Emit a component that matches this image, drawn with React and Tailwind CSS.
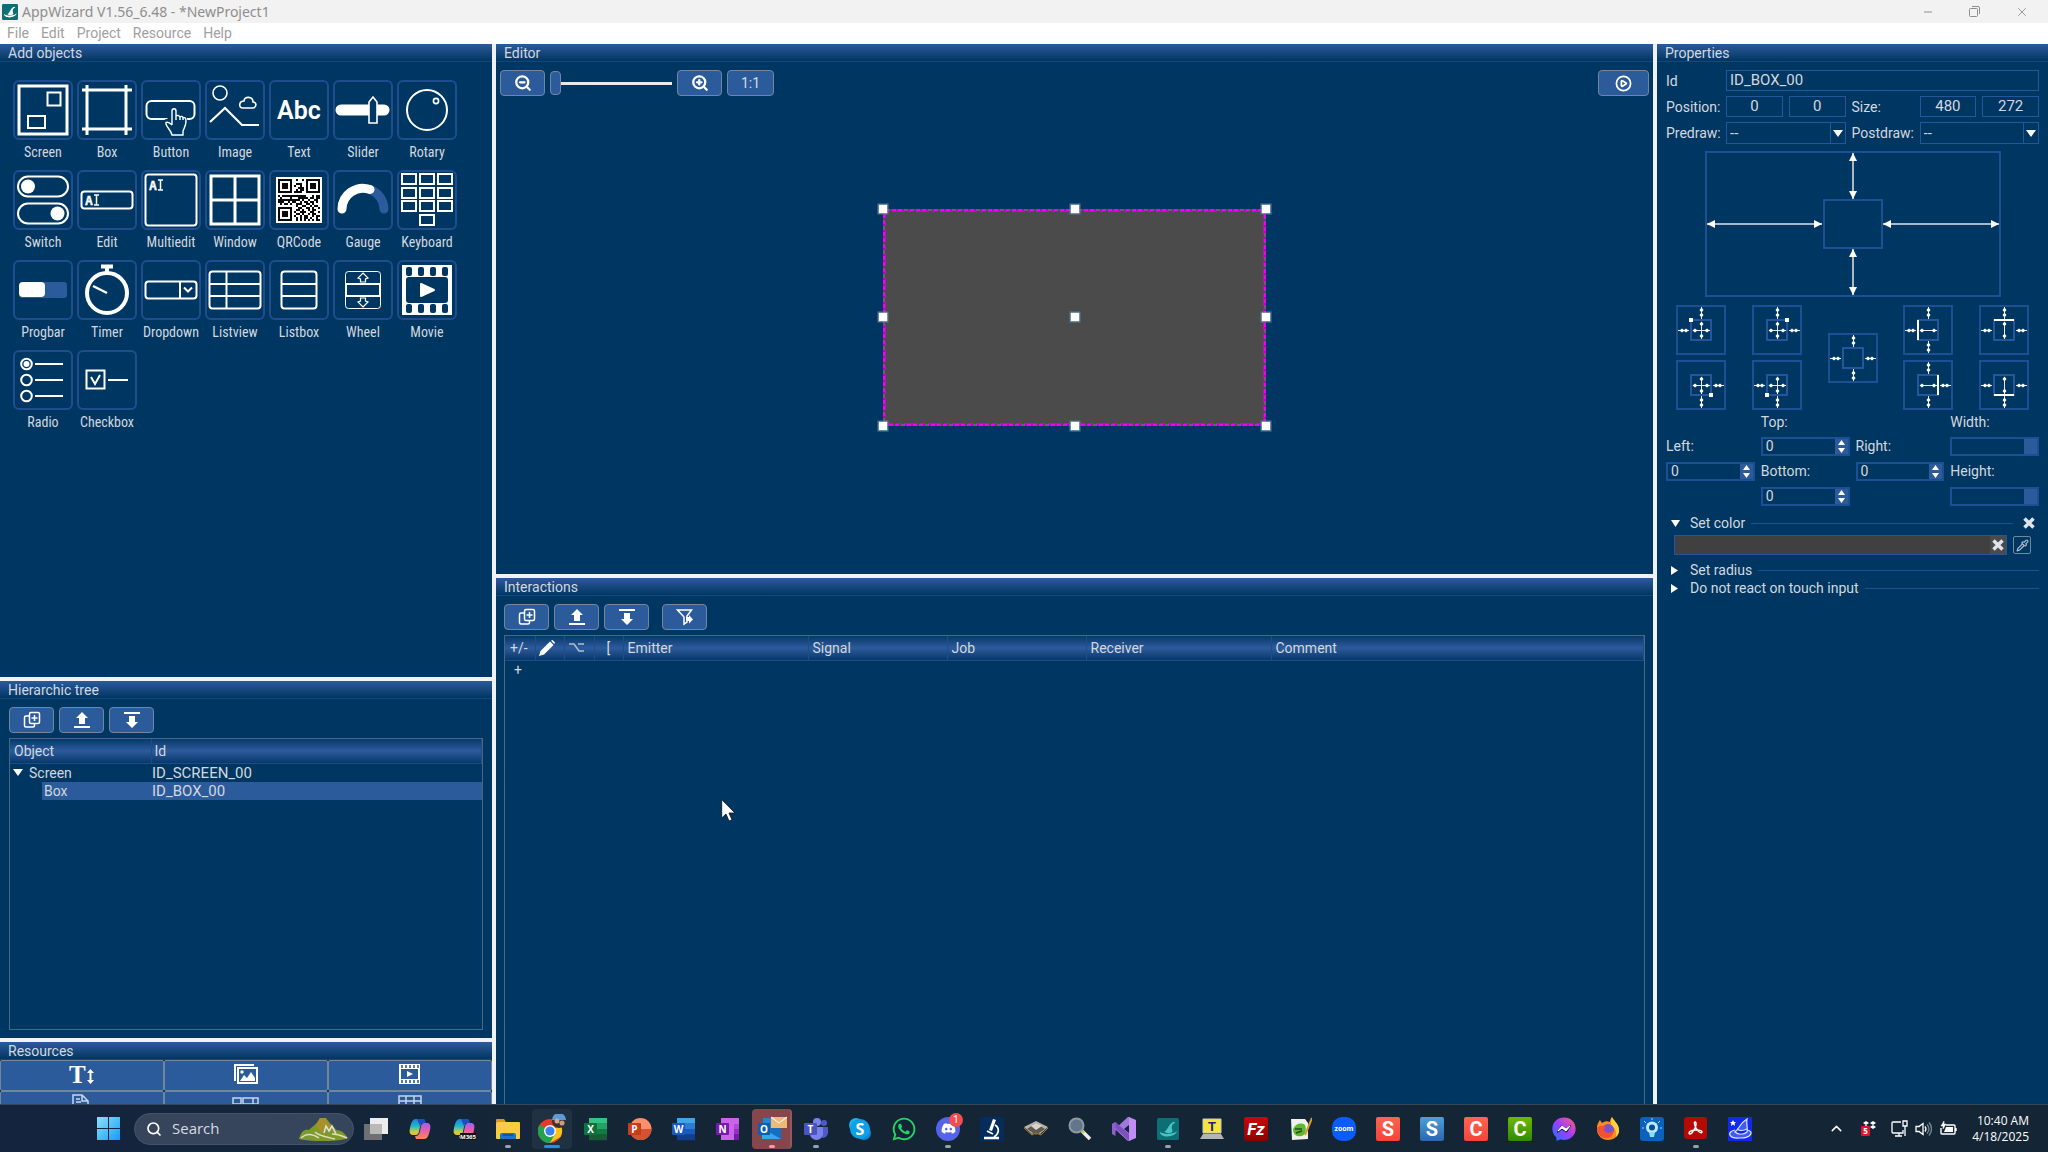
import { useState } from "react";
import { ZoomIn, ZoomOut, CirclePlay, Search, Minus, X, ChevronUp, Pipette } from "lucide-react";
import { FaDiscord, FaWhatsapp, FaFacebookMessenger } from "react-icons/fa";

const BG = "#003662";

/* ---------- object icons, all on a 60x60 tile ---------- */

const qrCells = (() => {
    const cells = [];
    const finder = (x, y, ox, oy) => {
        const dx = x - ox, dy = y - oy;
        if (dx < -1 || dy < -1 || dx > 7 || dy > 7) return null;
        if (dx < 0 || dy < 0 || dx > 6 || dy > 6) return false;
        if (dx === 0 || dy === 0 || dx === 6 || dy === 6) return true;
        return dx > 1 && dx < 5 && dy > 1 && dy < 5;
    };
    let seed = 77;
    for (let y = 0; y < 21; y++) {
        for (let x = 0; x < 21; x++) {
            seed = (seed * 1103515245 + 12345) % 2147483648;
            const f = finder(x, y, 0, 0) ?? finder(x, y, 14, 0) ?? finder(x, y, 0, 14);
            if (f === null ? (seed >> 12) % 2 === 0 : f) cells.push([x, y]);
        }
    }
    return cells;
})();

const TextCursor = ({ x, y }) => (
    <g>
        <text x={x} y={y + 11} fontSize="13" fontWeight="bold" fontFamily="DejaVu Sans Mono, monospace" fill="#fff">A</text>
        <path d={`M${x + 9} ${y + 1}h5M${x + 11.5} ${y + 1}v10M${x + 9} ${y + 11}h5`} strokeWidth="1.5" />
    </g>
);

const objects = [
    { name: "Screen", icon: <g><rect x="6" y="6" width="48" height="48" strokeWidth="3" /><rect x="34.5" y="12.5" width="13" height="13" /><rect x="15" y="36" width="17" height="12" /></g> },
    { name: "Box", icon: <path d="M10 5v50M49 5v50M5 10h50M5 49h50" strokeWidth="3" /> },
    {
        name: "Button", icon: <g>
            <rect x="5.5" y="21" width="48" height="18" rx="5" />
            <path d="M29 43V31c0-3 4-3 4 0v5c1-1 3-1 4 1 1-1 3-1 3 1 2-1 4 0 4 3 0 5-2 8-3 10v4H31c-1-5-5-8-6-12 0-2 2-2 4 0z" fill={BG} stroke={BG} strokeWidth="5" />
            <path d="M31 45V31c0-3 4-3 4 0v9m0-4c1-1 3-1 4 1v3m0-3c1-1 3-1 3 1v2m0-2c2-1 3 0 3 3 0 5-2 7-3 10v4H31c-1-5-5-7-6-11-1-3 3-2 6 1" strokeWidth="1.4" />
        </g>
    },
    { name: "Image", icon: <g strokeWidth="1.6"><circle cx="15" cy="13" r="7" /><path d="M38 28h9c5 0 5-6 1-6 0-6-9-6-9-1-5 0-6 7-1 7z" /><path d="M5 42 20 28 37 45h17" strokeWidth="2.2" /></g> },
    { name: "Text", icon: <text x="30" y="39" fontSize="25" fontWeight="600" textAnchor="middle" fontFamily="Roboto, sans-serif" fill="#fff" stroke="none">Abc</text> },
    { name: "Slider", icon: <g><path d="M8 30h43" strokeWidth="11" strokeLinecap="round" /><path d="M36 43V22l4-5 4 5v21z" fill={BG} strokeWidth="1.6" /></g> },
    { name: "Rotary", icon: <g><circle cx="30" cy="30" r="20" /><circle cx="39" cy="21" r="2.6" strokeWidth="1.6" /></g> },
    { name: "Switch", icon: <g><rect x="5" y="6.5" width="50" height="20" rx="10" /><rect x="5" y="33.5" width="50" height="20" rx="10" /><circle cx="15" cy="16.5" r="7" fill="#fff" stroke="none" /><circle cx="44.500" cy="43.5" r="7" fill="#fff" stroke="none" /></g> },
    { name: "Edit", icon: <g><rect x="4.5" y="21.500" width="51" height="17" rx="3" /><g strokeWidth=".3"><TextCursor x={8} y={24} /></g></g> },
    { name: "Multiedit", icon: <g><rect x="4.5" y="4.5" width="51" height="51" rx="3" /><g strokeWidth=".3"><TextCursor x={8} y={9} /></g></g> },
    { name: "Window", icon: <path d="M6 6h48v48H6zM30 6v48M6 30h48" strokeWidth="3" /> },
    {
        name: "QRCode", icon: <g stroke="none" shapeRendering="crispEdges">
            <rect x="7" y="7" width="46" height="46" fill="#fff" />
            {qrCells.map(([x, y]) => <rect key={`${x}-${y}`} x={9 + x * 2} y={9 + y * 2} width="2" height="2" fill="#0a0a0a" />)}
        </g>
    },
    { name: "Gauge", icon: <g strokeWidth="9" strokeLinecap="round"><path d="M37 19.500A21 21 0 0 1 51 39" stroke="#2c5b9c" /><path d="M9 39A21 21 0 0 1 37 19.5" /></g> },
    { name: "Keyboard", icon: <g>{[[4, 4], [22, 4], [40, 4], [4, 18], [22, 18], [40, 18], [4, 31], [22, 31], [40, 31], [22, 45]].map(([x, y]) => <rect key={`${x}-${y}`} x={x + 1} y={y} width="14" height="10" />)}</g> },
    { name: "Progbar", icon: <g stroke="none"><rect x="6" y="22" width="48" height="16" rx="3" fill="#2c5b9c" /><rect x="6" y="22" width="26" height="15" rx="4" fill="#fff" /></g> },
    { name: "Timer", icon: <g><circle cx="30" cy="33" r="20" strokeWidth="4" /><path d="M24 6.500h12M30 6v7" strokeWidth="4" /><path d="m16 26 14 7" strokeWidth="2.5" /></g> },
    { name: "Dropdown", icon: <g><rect x="4.5" y="21.500" width="51" height="17" rx="3" /><path d="M39 22v16M43 27.500l4 4 4-4" /></g> },
    { name: "Listview", icon: <g><rect x="4.500" y="11.500" width="51" height="37" rx="3" /><path d="M5 24h50M5 36h50M21.500 12v36" /></g> },
    { name: "Listbox", icon: <g><rect x="12.500" y="11.500" width="35" height="37" rx="3" /><path d="M13 24h34M13 36h34" /></g> },
    { name: "Wheel", icon: <g><rect x="12.500" y="11.500" width="35" height="37" rx="3" strokeWidth="1" /><path d="M13 24v12M47 24v12M13 24h34M13 36h34" /><path d="m30 13 5 5-2.500 1v3h-5v-3L25 18zM30 47l5-5-2.500-1v-3h-5v3L25 42z" strokeWidth="1.200" /></g> },
    {
        name: "Movie", icon: <g stroke="none" fill={BG}>
            <rect x="5" y="5" width="50" height="50" fill="#fff" />
            {[9, 21, 33, 45].map((x) => <g key={x}><rect x={x} y="7" width="6" height="9" rx="2" /><rect x={x} y="44" width="6" height="9" rx="2" /></g>)}
            <rect x="9" y="17" width="42" height="26" rx="3" />
            <path d="M24 24v12l13-6z" fill="#fff" stroke="#fff" strokeWidth="2" strokeLinejoin="round" />
        </g>
    },
    { name: "Radio", icon: <g>{[14, 30, 46].map((y) => <g key={y}><circle cx="13.500" cy={y} r="5.300" /><path d={`M22 ${y}h28`} /></g>)}<circle cx="13.500" cy="14" r="3" fill="#fff" stroke="none" /></g> },
    { name: "Checkbox", icon: <g><rect x="9.500" y="20.500" width="18" height="18" /><path d="m14 27 4 7 5-9M31 30h20" /></g> },
];

/* ---------- small shared pieces ---------- */

const CopyPlusIcon = () => (
    <svg width="18" height="18" viewBox="0 0 18 18" fill="none" stroke="#fff" strokeWidth="1.500">
        <rect x="6.500" y="1.500" width="10" height="11" rx="1.500" />
        <path d="M6 5H3Q1.500 5 1.500 6.500v8Q1.500 16 3 16h7q1.500 0 1.500-1.500V13M11.500 4v6M8.500 7h6" />
    </svg>
);
const MoveUpIcon = () => (
    <svg width="18" height="18" viewBox="0 0 18 18" fill="#fff"><path d="m9 1 6 6h-3v6H6V7H3zM1 15h16v2H1z" /></svg>
);
const MoveDownIcon = () => (
    <svg width="18" height="18" viewBox="0 0 18 18" fill="#fff"><path d="m9 17 6-6h-3V5H6v6H3zM1 1h16v2H1z" /></svg>
);

function ToolButton({ label, wide, children }) {
    return (
        <button aria-label={label} className={`flex h-[26px] items-center justify-center rounded-sm border border-[#74869c] bg-[#2c5b9c] text-sm text-[#d6dbe2] ${wide || "w-[45px]"}`}>
            {children}
        </button>
    );
}

function PanelTitle({ children }) {
    return (
        <h2 className="h-[18px] shrink-0 border-b border-[#15477f] bg-linear-to-b from-[#2c5b9c] to-[#003662] px-2 text-sm leading-[18px]">{children}</h2>
    );
}

const heading = "h-6 border border-t-0 border-l-0 border-[#1e4c88] bg-linear-to-b from-[#06386a] via-[#2c5b9c] to-[#06386a] text-left font-normal";

function Spinner({ label, value }) {
    return (
        <div className="flex h-[19px] border-2 border-[#1f4f93]">
            <input aria-label={label} defaultValue={value} className="w-full min-w-0 flex-1 bg-transparent px-[3px] outline-none" />
            <div className="flex w-[13px] flex-col items-center justify-around bg-[#2c5b9c]">
                {value !== "" && (
                    <>
                        <button aria-label={`${label} up`}><svg width="7" height="5"><path d="M3.500 0 7 5H0z" fill="#fff" /></svg></button>
                        <button aria-label={`${label} down`}><svg width="7" height="5"><path d="M3.500 5 7 0H0z" fill="#fff" /></svg></button>
                    </>
                )}
            </div>
        </div>
    );
}

function Dropdown({ id }) {
    return (
        <div className="relative flex h-[22px] border border-[#27559b] text-[15px]">
            <select id={id} className="w-full appearance-none bg-transparent px-[3px] outline-none"><option>--</option></select>
            <span className="pointer-events-none absolute inset-y-0 right-0 flex w-[15px] items-center justify-center border-l border-[#27559b]">
                <svg width="10" height="7"><path d="M0 0h10L5 7z" fill="#fff" /></svg>
            </span>
        </div>
    );
}

/* ---------- left column ---------- */

function AddObjects() {
    return (
        <section className="min-h-0 flex-[633_1_0%]">
            <PanelTitle>Add objects</PanelTitle>
            <div className="grid grid-cols-[repeat(7,60px)] gap-1 px-[13px] pt-[18px]">
                {objects.map((o) => (
                    <button key={o.name} className="flex h-[86px] flex-col items-center">
                        <span className="rounded-md outline-2 -outline-offset-2 outline-[#1f4d8e]">
                            <svg width="60" height="60" viewBox="0 0 60 60" fill="none" stroke="#fff" strokeWidth="2">{o.icon}</svg>
                        </span>
                        <span className="mt-1 font-['Roboto_Condensed','Liberation_Sans_Narrow',Roboto,sans-serif] text-sm leading-4">{o.name}</span>
                    </button>
                ))}
            </div>
        </section>
    );
}

function HierarchicTree() {
    return (
        <section className="flex min-h-0 flex-[357_1_0%] flex-col border-t-4 border-[#f0f1f5]">
            <PanelTitle>Hierarchic tree</PanelTitle>
            <div className="flex gap-[5px] px-[9px] pt-2 pb-[5px]">
                <ToolButton label="Duplicate"><CopyPlusIcon /></ToolButton>
                <ToolButton label="Move up"><MoveUpIcon /></ToolButton>
                <ToolButton label="Move down"><MoveDownIcon /></ToolButton>
            </div>
            <div className="mx-[9px] mb-2 flex-1 border border-[#4a6683]">
                <table className="w-full table-fixed border-collapse text-[15px]">
                    <thead className="text-sm">
                        <tr><th className={`${heading} w-[141px] pl-1`}>Object</th><th className={`${heading} pl-[3px]`}>Id</th></tr>
                    </thead>
                    <tbody>
                        <tr>
                            <td><div className="flex items-center gap-[6px] pl-[3px] text-sm leading-[18px]"><svg width="10" height="7"><path d="M0 0h10L5 7z" fill="#fff" /></svg>Screen</div></td>
                            <td className="pl-[1px] leading-[18px]">ID_SCREEN_00</td>
                        </tr>
                        <tr>
                            <td><div className="ml-8 bg-[#2c5b9c] pl-[2px] text-sm leading-[18px]">Box</div></td>
                            <td className="bg-[#2c5b9c] pl-[1px] leading-[18px]">ID_BOX_00</td>
                        </tr>
                    </tbody>
                </table>
            </div>
        </section>
    );
}

const resources = [
    { name: "Fonts", icon: <g><text x="0" y="20" fontSize="25" fontWeight="bold" fontFamily="Liberation Serif, serif">T</text><path d="m21.500 6 3.500 4h-2.500v7H25l-3.500 4-3.500-4h2.500v-7H18z" /></g> },
    { name: "Images", icon: <g><path d="M1 1h20v2H3v15H1z" /><path d="M4 4h21v17H4zm2 2v13h17V6z" fillRule="evenodd" /><path d="m7 18 4-6 3 3 4-6 4 6v3z" /><circle cx="9" cy="9" r="1.700" /></g> },
    { name: "Videos", icon: <g><path d="M2 1h21v20H2zm2 5v10h17V6z" fillRule="evenodd" /><path d="M5 2v3M9 2v3M13 2v3M17 2v3M21 2v3M5 17v3M9 17v3M13 17v3M17 17v3M21 17v3" stroke="#2c5b9c" strokeWidth="1.600" /><path d="M10 8v6l6-3z" /></g> },
    { name: "Texts", icon: <g fill="none" stroke="#c9d6ea" strokeWidth="1.500"><path d="M4 20V1h9l6 6v13M13 1v6h6M7 5h4M7 8h5M7 11h9" /></g> },
    { name: "Variables", icon: <g fill="none" stroke="#c9d6ea" strokeWidth="1.500"><path d="M0 4h8v6H0zM10 4h15v6H10zM20 4v6" /></g> },
    { name: "Tables", icon: <path d="M2 2h22v17H2zM2 7h22M9 2v16M17 2v16" fill="none" stroke="#c9d6ea" strokeWidth="1.500" /> },
];

function Resources() {
    return (
        <section className="h-[66px] shrink-0 overflow-hidden border-t-4 border-[#f0f1f5]">
            <PanelTitle>Resources</PanelTitle>
            <div className="grid grid-cols-3">
                {resources.map((r) => (
                    <button key={r.name} aria-label={r.name} className="flex h-[31px] items-start justify-center rounded-xs border border-[#74869c] bg-[#2c5b9c] pt-[2px]">
                        <svg className="overflow-visible" width="26" height="22" viewBox="0 0 26 22" fill="#fff">{r.icon}</svg>
                    </button>
                ))}
            </div>
        </section>
    );
}

/* ---------- centre ---------- */

function Editor() {
    const [zoom, setZoom] = useState(0);
    const handles = [0, 50, 100].flatMap((y) => [0, 50, 100].map((x) => [x, y]));

    return (
        <section className="flex min-h-0 flex-[532_1_0%] flex-col">
            <PanelTitle>Editor</PanelTitle>
            <div className="flex items-center gap-[5px] px-1 pt-2">
                <ToolButton label="Zoom out"><ZoomOut size={18} strokeWidth={3} color="#fff" /></ToolButton>
                <input type="range" aria-label="Zoom" min="0" max="100" value={zoom} onChange={(e) => setZoom(e.target.value)}
                    className="h-6 w-[122px] appearance-none bg-transparent [&::-webkit-slider-runnable-track]:h-[3px] [&::-webkit-slider-runnable-track]:bg-[#e8e9ee] [&::-webkit-slider-thumb]:mt-[-11px] [&::-webkit-slider-thumb]:h-6 [&::-webkit-slider-thumb]:w-[11px] [&::-webkit-slider-thumb]:appearance-none [&::-webkit-slider-thumb]:rounded-sm [&::-webkit-slider-thumb]:border [&::-webkit-slider-thumb]:border-[#74869c] [&::-webkit-slider-thumb]:bg-[#2c5b9c]" />
                <ToolButton label="Zoom in"><ZoomIn size={18} strokeWidth={3} color="#fff" /></ToolButton>
                <ToolButton label="Original size" wide="w-[47px]">1:1</ToolButton>
                <div className="flex-1" />
                <ToolButton label="Play" wide="w-[51px]"><CirclePlay size={17} strokeWidth={2.5} color="#fff" /></ToolButton>
            </div>
            <div className="flex flex-1 items-center justify-center pb-9">
                <div className="relative h-[217px] w-[383px] bg-[#4b4b4b]">
                    <svg className="absolute inset-0" width="383" height="217">
                        <rect x="1" y="1" width="381" height="215" fill="none" stroke="#8a6f8c" strokeWidth="1" />
                        <rect x="1" y="1" width="381" height="215" fill="none" stroke="#f200f2" strokeWidth="3" strokeDasharray="5 3 13 3" />
                        <rect x="1" y="1" width="381" height="215" fill="none" stroke="#7a0a7a" strokeWidth="1" strokeDasharray="2 4" />
                    </svg>
                    {handles.map(([x, y]) => (
                        <span key={`${x}-${y}`} className="absolute size-[9px] -translate-1/2 bg-white outline outline-[#56789a]" style={{ left: `${x}%`, top: `${y}%` }} />
                    ))}
                </div>
            </div>
        </section>
    );
}

function Interactions() {
    return (
        <section className="relative flex min-h-0 flex-[528_1_0%] flex-col border-t-4 border-[#f0f1f5]">
            <PanelTitle>Interactions</PanelTitle>
            <div className="flex gap-[5px] px-2 pt-2 pb-[5px]">
                <ToolButton label="Duplicate interaction"><CopyPlusIcon /></ToolButton>
                <ToolButton label="Move interaction up"><MoveUpIcon /></ToolButton>
                <ToolButton label="Move interaction down"><MoveDownIcon /></ToolButton>
                <div className="w-[3px]" />
                <ToolButton label="Filter">
                    <svg width="18" height="18" viewBox="0 0 18 18" fill="none" stroke="#fff" strokeWidth="1.500"><path d="M1.500 2h14L11 8v6l-3 2V9z" /><path d="M10 9h3V7l4 4.500-4 4V13h-3z" fill="#fff" stroke="none" /></svg>
                </ToolButton>
            </div>
            <div className="mx-2 flex-1 border border-b-0 border-[#4a6683]">
                <table className="w-full table-fixed border-collapse text-sm">
                    <thead>
                        <tr>
                            <th className={`${heading} w-[30px] pl-[5px]`}>+/-</th>
                            <th className={`${heading} w-[29px] pl-[3px]`}><svg width="16" height="16" aria-label="Edit"><path d="m0 16 1.500-5L11 1.500l3.500 3.500L5 14.500zM12 .8l1.500-.8L16 2.500l-.8 1.500z" fill="#fff" /></svg></th>
                            <th className={`${heading} w-[30px] pl-1`}><svg width="16" height="10" aria-label="Branch"><path d="M0 1h5l5 7h5M9 1h6" fill="none" stroke="#aebfd6" strokeWidth="1.500" /></svg></th>
                            <th className={`${heading} w-[29px] pl-3`}>[</th>
                            <th className={`${heading} w-[185px] pl-1`}>Emitter</th>
                            <th className={`${heading} w-[139px] pl-1`}>Signal</th>
                            <th className={`${heading} w-[139px] pl-1`}>Job</th>
                            <th className={`${heading} w-[185px] pl-1`}>Receiver</th>
                            <th className={`${heading} pl-1`}>Comment</th>
                        </tr>
                    </thead>
                    <tbody>
                        <tr><td className="pr-1 text-center leading-[18px]"><button aria-label="Add interaction">+</button></td><td colSpan="8" /></tr>
                    </tbody>
                </table>
            </div>
            <svg className="absolute top-[220px] left-[225px]" width="15" height="24" viewBox="0 0 15 24">
                <path d="M.7 1.500v18.500l4.300-4 3 7 3-1.300-3-6.700h6z" fill="#fff" stroke="#111" strokeWidth=".8" />
            </svg>
        </section>
    );
}

/* ---------- properties ---------- */

// double headed arrow, drawn horizontally or vertically
function Arrow({ x1, y1, x2, y2 }) {
    if (y1 === y2) {
        return <g><path d={`M${x1} ${y1}H${x2}`} /><path d={`M${x1} ${y1}l8-4v8zM${x2} ${y1}l-8-4v8z`} fill="#fff" stroke="none" /></g>;
    }
    return <g><path d={`M${x1} ${y1}V${y2}`} /><path d={`M${x1} ${y1}l-4 8h8zM${x1} ${y2}l-4-8h8z`} fill="#fff" stroke="none" /></g>;
}

// at the small size the arrow heads are only knots on the line
const diamond = (x, y) => `M${x - 2.5} ${y}l2.5-2 2.500 2-2.500 2z`;
const tallDiamond = (x, y) => `M${x - 2} ${y}l2-2.500 2 2.500-2 2.500z`;

const arrows = {
    left: { line: "M2 25.500h11", knots: diamond(6, 25.5) + diamond(10, 25.5) },
    right: { line: "M37 25.500h11", knots: diamond(40, 25.5) + diamond(44, 25.5) },
    top: { line: "M25.500 2v12", knots: tallDiamond(25.5, 5) + tallDiamond(25.5, 10) },
    bottom: { line: "M25.500 36v12", knots: tallDiamond(25.5, 40) + tallDiamond(25.5, 45) },
    h: { line: "M17 25.500h17", knots: diamond(19, 25.5) + diamond(31, 25.5) },
    v: { line: "M25.500 17v17", knots: tallDiamond(25.5, 19) + tallDiamond(25.5, 31) },
};

function Anchor({ name, parts, dot, edge }) {
    return (
        <button aria-label={name}>
            <svg width="50" height="50" viewBox="0 0 50 50" fill="none" stroke="#e6ebf2" strokeWidth="1">
                <rect x="1" y="1" width="48" height="48" stroke="#1f4f93" strokeWidth="2" />
                <rect x="15" y="15" width="20" height="20" stroke="#27559b" strokeWidth="2" />
                {parts.map((p) => (
                    <g key={p}>
                        <path d={arrows[p].line} />
                        <path d={arrows[p].knots} fill="#fff" stroke="none" />
                    </g>
                ))}
                {dot && <rect x={dot[0] - 2} y={dot[1] - 2} width="4" height="4" fill="#fff" stroke="none" />}
                {edge && <path d={edge} stroke="#fff" strokeWidth="2" />}
            </svg>
        </button>
    );
}

const anchorColumns = [
    [{ name: "Top left", parts: ["left", "top", "h", "v"], dot: [15, 15] }, { name: "Bottom right", parts: ["right", "bottom", "h", "v"], dot: [35, 35] }],
    [{ name: "Top right", parts: ["right", "top", "h", "v"], dot: [35, 15] }, { name: "Bottom left", parts: ["left", "bottom", "h", "v"], dot: [15, 35] }],
    [{ name: "All sides", parts: ["left", "right", "top", "bottom"] }],
    [{ name: "Left side", parts: ["left", "top", "bottom", "h"], edge: "M15 15v20" }, { name: "Right side", parts: ["right", "top", "bottom", "h"], edge: "M35 15v20" }],
    [{ name: "Top side", parts: ["left", "right", "top", "v"], edge: "M15 15h20" }, { name: "Bottom side", parts: ["left", "right", "bottom", "v"], edge: "M15 35h20" }],
];

const CrossIcon = () => (
    <svg width="12" height="12"><path d="m1.500 1.500 9 9M10.500 1.500l-9 9" stroke="#dfe3ea" strokeWidth="3.500" /></svg>
);

function Properties() {
    const field = "h-[21px] w-full min-w-0 border border-[#27559b] bg-transparent outline-none";
    return (
        <section className="w-[395px] shrink-0 border-l-4 border-[#f0f1f5]">
            <PanelTitle>Properties</PanelTitle>
            <div className="px-[9px] pt-2 text-sm">
                <div className="grid grid-cols-[60px_1fr_74px_1fr] items-center gap-y-[5px]">
                    <label htmlFor="prop-id">Id</label>
                    <input id="prop-id" defaultValue="ID_BOX_00" className={`${field} col-span-3 px-[3px] text-[15px]`} />
                    <label htmlFor="prop-x">Position:</label>
                    <div className="flex gap-[6px] text-[15px]">
                        <input id="prop-x" defaultValue="0" className={`${field} text-center`} />
                        <input aria-label="Position y" defaultValue="0" className={`${field} text-center`} />
                    </div>
                    <label htmlFor="prop-w" className="pl-[6px]">Size:</label>
                    <div className="flex gap-[6px] text-[15px]">
                        <input id="prop-w" defaultValue="480" className={`${field} text-center`} />
                        <input aria-label="Height in pixels" defaultValue="272" className={`${field} text-center`} />
                    </div>
                    <label htmlFor="predraw">Predraw:</label>
                    <Dropdown id="predraw" />
                    <label htmlFor="postdraw" className="pl-[6px]">Postdraw:</label>
                    <Dropdown id="postdraw" />
                </div>

                <svg className="mx-auto mt-[7px]" width="296" height="146" fill="none" stroke="#dfe5ee" strokeWidth="1.500">
                    <rect x="1" y="1" width="294" height="144" stroke="#1f4f93" strokeWidth="2" />
                    <rect x="119" y="49" width="58" height="48" stroke="#1f4f93" strokeWidth="2" />
                    <Arrow x1={2} y1={73} x2={117} y2={73} />
                    <Arrow x1={178} y1={73} x2={294} y2={73} />
                    <Arrow x1={148} y1={2} x2={148} y2={48} />
                    <Arrow x1={148} y1={98} x2={148} y2={144} />
                </svg>

                <div className="flex items-center justify-between px-[10px] pt-2">
                    {anchorColumns.map((col) => (
                        <div key={col[0].name} className="flex flex-col gap-[5px]">
                            {col.map((a) => <Anchor key={a.name} {...a} />)}
                        </div>
                    ))}
                </div>

                <div className="mt-[3px] grid grid-cols-4 grid-rows-[18px_19px_19px_19px] gap-[6px] leading-[19px]">
                    <span /><span>Top:</span><span /><span>Width:</span>
                    <span>Left:</span><Spinner label="Top" value="0" /><span>Right:</span><Spinner label="Width" value="" />
                    <Spinner label="Left" value="0" /><span>Bottom:</span><Spinner label="Right" value="0" /><span>Height:</span>
                    <span /><Spinner label="Bottom" value="0" /><span /><Spinner label="Height" value="" />
                </div>

                <div className="mt-2 flex h-[18px] items-center">
                    <button className="flex items-center gap-[10px] pl-[5px]"><svg width="9" height="7"><path d="M0 0h9L4.500 7z" fill="#fff" /></svg>Set color</button>
                    <span className="mx-[6px] h-px flex-1 bg-[#1f4f93]" />
                    <button aria-label="Remove color" className="px-1"><CrossIcon /></button>
                </div>
                <div className="mt-[3px] flex items-center gap-[6px] pr-2 pl-2">
                    <div className="flex h-5 flex-1 items-center justify-end border border-[#27559b] bg-[#404040]">
                        <button aria-label="Clear color" className="flex h-full w-4 items-center justify-center bg-[#4b4b4b]"><CrossIcon /></button>
                    </div>
                    <button aria-label="Pick color" className="flex size-[18px] items-center justify-center rounded-xs border border-[#74869c]"><Pipette size={13} color="#b9c6d4" /></button>
                </div>
                <div className="mt-[6px]">
                    {["Set radius", "Do not react on touch input"].map((s) => (
                        <div key={s} className="flex h-[18px] items-center">
                            <button className="flex items-center gap-3 pl-[5px]"><svg width="7" height="9"><path d="M0 0v9l7-4.500z" fill="#fff" /></svg>{s}</button>
                            <span className="ml-[6px] h-px flex-1 bg-[#1f4f93]" />
                        </div>
                    ))}
                </div>
            </div>
        </section>
    );
}

/* ---------- taskbar ---------- */

// square app tile with a letter on it
const Tile = ({ from, to, letter, size = 17, italic }) => (
    <svg width="24" height="24" viewBox="0 0 24 24">
        <defs><linearGradient id={`t${from.slice(1)}`} x2="0" y2="1"><stop stopColor={from} /><stop offset="1" stopColor={to} /></linearGradient></defs>
        <rect width="24" height="24" rx="2" fill={`url(#t${from.slice(1)})`} />
        <text x="12" y={italic ? 18 : 19} fontSize={size} fontWeight="bold" fontStyle={italic ? "italic" : "normal"} textAnchor="middle" fontFamily="Roboto, sans-serif" fill="#fff">{letter}</text>
    </svg>
);

const Office = ({ letter, dark, children }) => (
    <svg width="24" height="24" viewBox="0 0 24 24">
        {children}
        <rect x="0" y="6" width="13" height="12" rx="1" fill={dark} />
        <text x="6.500" y="15.500" fontSize="10" fontWeight="bold" textAnchor="middle" fontFamily="Open Sans, sans-serif" fill="#fff">{letter}</text>
    </svg>
);

const Bands = ({ colors }) => (
    <g>{colors.map((c, i) => <rect key={c} x="5" y={1 + i * (22 / colors.length)} width="18" height={22 / colors.length + 0.2} fill={c} />)}</g>
);

const Copilot = ({ badge }) => (
    <svg width="24" height="24" viewBox="0 0 24 24">
        <defs>
            <linearGradient id="cpA" x2="0" y2="1"><stop stopColor="#1e7fe0" /><stop offset=".45" stopColor="#20b8c8" /><stop offset=".8" stopColor="#c8d040" /><stop offset="1" stopColor="#f5b82a" /></linearGradient>
            <linearGradient id="cpB" x2="0" y2="1"><stop stopColor="#a05ff0" /><stop offset=".5" stopColor="#e860a8" /><stop offset="1" stopColor="#ff8a50" /></linearGradient>
        </defs>
        <path d="M16 2H8C4 2 3 7 2 11c-1 5 0 7 3 7h3c3 0 3-4 4-8s2-5 5-5z" fill="url(#cpA)" />
        <path d="M8 22h8c4 0 5-5 6-9 1-5 0-7-3-7h-3c-3 0-3 4-4 8s-2 5-5 5z" fill="url(#cpB)" />
        <path d="M9 2h6c2 0 2 1 3 4h-3c-2 0-3 1-3 3z" fill="#1a4fc4" />
        {badge && <g><rect x="8" y="16" width="16" height="7" fill="#111" /><text x="16" y="22" fontSize="6" fontWeight="bold" textAnchor="middle" fontFamily="Open Sans, sans-serif" fill="#fff">M365</text></g>}
    </svg>
);

const Hat = ({ color = "#4cc3c6", size = 24, bg = "#0c6f74" }) => (
    <svg width={size} height={size} viewBox="0 0 24 24">
        <rect width="24" height="24" rx="2" fill={bg} />
        <path d="M3 15c0 7 17 7 19-1-2 2-4 3-7 3-5 1-9 0-12-2z" fill={color} />
        <path d="M8 15c4-2 4-8 10-11l2 1-3 2c-2 3 0 6 0 8-2 2-7 2-9 0z" fill={color} />
    </svg>
);

const apps = [
    { name: "Task view", icon: <svg width="26" height="24"><rect x="7" y="1" width="18" height="16" fill="#ececec" /><rect x="1" y="7" width="18" height="16" fill="#7e7e7e" fillOpacity=".85" /><rect x="7" y="7" width="12" height="10" fill="#b9b9b9" /></svg> },
    { name: "Copilot", icon: <Copilot /> },
    { name: "Copilot M365", icon: <Copilot badge /> },
    { name: "File Explorer", open: true, icon: <svg width="24" height="24"><path d="M0 3q0-1 1-1h7l2 3h-10z" fill="#dc9a12" /><rect y="5" width="24" height="17" rx="1" fill="#fccb45" /><path d="M4 22v-4q0-2 2-2h12q2 0 2 2v4z" fill="#1577c8" /><path d="M7 18h10" stroke="#0c4f8c" strokeWidth="1.500" /></svg> },
    {
        name: "Chrome", active: true, icon: <svg width="28" height="30" viewBox="0 0 28 30">
            <circle cx="12" cy="17" r="12" fill="#e33b2e" /><path d="M12 17 1.600 11A12 12 0 0 0 12 29z" fill="#25a250" /><path d="m12 29 10.500-6A12 12 0 0 0 22.500 11L12 17z" fill="#fbc116" /><path d="M1.600 11A12 12 0 0 0 12 29l5-9z" fill="#25a250" />
            <circle cx="12" cy="17" r="6" fill="#fff" /><circle cx="12" cy="17" r="4.600" fill="#3a80f0" />
            <circle cx="21" cy="7" r="7" fill="#3a3234" /><path d="M14 6a7 7 0 0 1 14 0z" fill="#5d9bd8" /><circle cx="19" cy="7" r="2.500" fill="#d7a58a" /><circle cx="24" cy="9" r="2.500" fill="#cf9a80" />
        </svg>
    },
    { name: "Excel", icon: <Office letter="X" dark="#107040"><Bands colors={["#33c481", "#21a366", "#107c41", "#185c37"]} /></Office> },
    { name: "PowerPoint", icon: <Office letter="P" dark="#c43e1c"><circle cx="12.500" cy="12" r="11" fill="#ff8f6b" /><path d="M1.500 12a11 11 0 0 0 22 0z" fill="#d35230" /></Office> },
    { name: "Word", icon: <Office letter="W" dark="#185abd"><Bands colors={["#41a5ee", "#2b7cd3", "#185abd", "#103f91"]} /></Office> },
    { name: "OneNote", icon: <Office letter="N" dark="#7719aa"><rect x="5" y="1" width="18" height="22" fill="#ca64ea" /><path d="M18 7h5v5h-5z" fill="#ae4bd5" /><path d="M18 12h5v5h-5z" fill="#9332bf" /><path d="M18 17h5v6h-5z" fill="#7719aa" /></Office> },
    {
        name: "Outlook", alert: true, icon: <svg width="30" height="26" viewBox="0 0 30 26">
            <rect x="6" y="2" width="17" height="20" fill="#1f86d8" /><path d="M5 12h19v11H5z" fill="#35a7ec" /><path d="m5 12 19 11V12z" fill="#1370c0" /><rect x="1" y="7" width="12" height="12" fill="#0f5fb0" />
            <text x="7" y="16.500" fontSize="10" fontWeight="bold" textAnchor="middle" fontFamily="Open Sans, sans-serif" fill="#fff">O</text>
            <rect x="14" y="1" width="16" height="11" fill="#efb976" /><path d="m14 1 8 6 8-6" fill="none" stroke="#fff" />
        </svg>
    },
    { name: "Teams", open: true, icon: <Office letter="T" dark="#4b53bc"><circle cx="13" cy="5" r="4" fill="#7b83eb" /><circle cx="20" cy="6" r="3" fill="#5059c9" /><path d="M16 10h8v6q-1 5-6 5z" fill="#5059c9" /><path d="M6 10h13v8q-2 5-7 5-5-1-6-5z" fill="#7b83eb" /></Office> },
    { name: "Skype", icon: <svg width="24" height="24"><circle cx="8" cy="8" r="7" fill="#1fb0f0" /><circle cx="16" cy="16" r="7" fill="#0a86d8" /><circle cx="12" cy="12" r="10" fill="#0f9fe6" /><text x="12" y="18" fontSize="16" fontWeight="bold" textAnchor="middle" fontFamily="Open Sans, sans-serif" fill="#fff">S</text></svg> },
    { name: "WhatsApp", icon: <FaWhatsapp size={26} color="#25d366" /> },
    { name: "Discord", open: true, badge: "1", icon: <span className="flex size-6 items-center justify-center rounded-full bg-[#5562ea]"><FaDiscord size={15} color="#fff" /></span> },
    { name: "Microscope", icon: <svg width="24" height="24"><rect width="24" height="24" fill="#062c5c" /><path d="m13 2 3 1-4 11-3-1z" fill="#fff" /><path d="m7 14 6 3M15 8c5 3 4 9-1 12" stroke="#fff" strokeWidth="1.800" fill="none" /><path d="M4 21h15" stroke="#fff" strokeWidth="2.500" /></svg> },
    { name: "Flash programmer", icon: <svg width="24" height="24"><path d="m0 10 12-6 12 6-8 7-4-2-4 2z" fill="#b9b4a8" /><path d="m3 12 9-6 9 6-9 6z" fill="#5f5a50" /><path d="m7 9 5-3 6 3-6 4z" fill="#d9d6cc" /><path d="m0 11 8 7 4-2 5 2 7-7" stroke="#a8792c" strokeWidth="1" fill="none" /></svg> },
    { name: "Magnifier", icon: <svg width="24" height="24"><path d="m14 14 8 8" stroke="#eee" strokeWidth="3.500" /><path d="m13 13 3 3" stroke="#b9d44a" strokeWidth="3" /><circle cx="8.500" cy="8.500" r="7" fill="#62758c" stroke="#8f98a3" strokeWidth="2" /></svg> },
    { name: "Visual Studio", icon: <svg width="24" height="24"><path d="m17 0 1 7L4 19l-4-2V7l4-2 3 3z" fill="none" /><path d="M17 0 4 12l-2-2v4l2-2 13 12v-7l-6-5 6-5z" fill="#a179dc" stroke="#a179dc" strokeWidth="1.500" /><path d="M0 7 3.500 5 17 17v7L0 8z" fill="#7d4fc0" /><path d="M0 7v10l3.500 2V5z" fill="#8d5fce" /><path d="M17 0v24l7-3V3z" fill="#c08cf5" /></svg> },
    { name: "AppWizard", open: true, icon: <Hat size={22} /> },
    { name: "Tera Term", icon: <svg width="24" height="24"><path d="M3 2h18v14H3z" fill="#f6e63c" stroke="#c9c9c9" /><text x="12" y="14" fontSize="13" fontWeight="bold" textAnchor="middle" fontFamily="Liberation Sans, sans-serif" fill="#1a237a">T</text><path d="M3 17h18l3 5H0z" fill="#b4b4b4" /></svg> },
    { name: "FileZilla", icon: <Tile from="#c80808" to="#8c0000" letter="Fz" size={17} italic /> },
    { name: "Notepad++", icon: <svg width="24" height="24"><path d="M3 2h14l3 4v16l-16 1z" fill="#eef2ea" /><path d="M5 12c2-5 8-7 12-4 2 5 0 11-4 11-5 1-8-2-8-7z" fill="#5fb832" /><path d="M7 12h7M8 16l6-2" stroke="#244d14" strokeWidth="1.500" /><path d="m24 1-7 17" stroke="#d99a2b" strokeWidth="2" /></svg> },
    { name: "Zoom", icon: <svg width="24" height="24"><rect width="24" height="24" rx="10" fill="#0b5cff" /><text x="12" y="14" fontSize="7" fontWeight="bold" textAnchor="middle" fontFamily="Open Sans, sans-serif" fill="#fff">zoom</text></svg> },
    { name: "Snagit", icon: <Tile from="#ff6450" to="#f5433a" letter="S" size={20} /> },
    { name: "Snagit Editor", icon: <Tile from="#4f9fd8" to="#2b68ac" letter="S" size={20} /> },
    { name: "Camtasia Recorder", icon: <Tile from="#ff6552" to="#f5443a" letter="C" size={20} /> },
    { name: "Camtasia", icon: <Tile from="#6fb800" to="#2f8c00" letter="C" size={20} /> },
    {
        name: "Messenger", icon: <svg width="24" height="24" viewBox="0 0 24 24">
            <defs><linearGradient id="msg" x1="1" y1="0" x2="0" y2="1"><stop stopColor="#ff5f74" /><stop offset=".5" stopColor="#a03cff" /><stop offset="1" stopColor="#1478ff" /></linearGradient></defs>
            <FaFacebookMessenger size={24} style={{ fill: "url(#msg)" }} /><path d="m6 14 4-5 4 3 4-3-4 5-4-3z" fill="#fff" stroke="#fff" />
        </svg>
    },
    { name: "Firefox", icon: <svg width="24" height="24"><path d="M1 9c1-3 2-5 3-6l2 3c3-2 5-2 8-1 0-2 1-4 2-5 1 3 7 7 7 13 0 6-5 10-11 10S1 18 1 13z" fill="#ff8a1f" /><path d="M16 0c1 3 7 7 7 13 0 3-1 5-3 7 1-6-1-9-5-12 0-3 0-6 1-8z" fill="#ffd43a" /><circle cx="12" cy="13" r="6" fill="#7a4fd0" /><path d="M1 11c3-3 7-3 9 0-3 0-3 3 0 4 3 2 6 0 7-2 1 6-4 9-9 8-4-1-7-5-7-10z" fill="#f5502f" /></svg> },
    { name: "Tips", icon: <svg width="24" height="24"><rect width="24" height="24" rx="3" fill="#0a62bd" /><circle cx="12" cy="10.500" r="6" fill="#bdeafa" /><path d="M9 15h6l-1 5h-4z" fill="#8fdcf5" /><circle cx="12" cy="10.500" r="3" fill="#0a4e94" /><path d="M12 1v2M4 4l2 2M20 4l-2 2M2 11h2M20 11h2" stroke="#8fdcf5" /></svg> },
    { name: "Acrobat", open: true, icon: <svg width="24" height="24"><rect width="23" height="22" rx="3" fill="#b30b00" /><path d="M11 5c2 0 1 5-1 8-2 4-5 5-5 3s4-3 7-3 6 0 6 2-4 0-6-4-2-6-1-6z" fill="none" stroke="#fff" strokeWidth="1.400" /></svg> },
    { name: "Wizard", icon: <svg width="24" height="24"><rect width="24" height="24" fill="#1128f0" /><path d="M7 15c4-3 5-9 12-13-1 4 1 9 0 13-3 3-9 3-12 0zM7 13c-9 2-6 9 5 8 12 0 14-7 7-8M9 12c3 2 6 2 10 0" fill="#6f8cf8" fillOpacity=".5" stroke="#dfe6ff" strokeWidth="1.200" /><path d="m5 3 1 2h2L6.500 6.500 7 9 5 7.500 3 9l.5-2.500L2 5h2z" fill="#fff" /></svg> },
];

function Taskbar() {
    return (
        <footer className="flex h-12 shrink-0 items-center border-t border-[#34475a] bg-linear-to-r from-[#14243f] via-[#142636] via-30% to-[#142636] pr-[19px] font-['Open_Sans',sans-serif] text-white">
            <button aria-label="Start" className="ml-[97px]">
                <svg width="23" height="23">
                    <defs><linearGradient id="win" x2="1" y2="1"><stop stopColor="#8be2fb" /><stop offset="1" stopColor="#149cf5" /></linearGradient></defs>
                    <path d="M0 0h11v11H0zM12 0h11v11H12zM0 12h11v11H0zM12 12h11v11H12z" fill="url(#win)" />
                </svg>
            </button>
            <label className="ml-[14px] flex h-8 w-[220px] items-center gap-[10px] rounded-full border border-[#455369] bg-[#36455c] pr-1 pl-[11px]">
                <Search size={16} strokeWidth={2.5} />
                <input placeholder="Search" className="w-0 min-w-0 flex-1 bg-transparent text-[15px] outline-none placeholder:text-[#d5dae1]" />
                <svg width="50" height="24">
                    <path d="M0 22c2-8 6-10 10-9 4-4 8-6 11-12h6c4 6 8 8 10 12 6 0 9 4 12 8-8 4-36 4-49 1z" fill="#7d9a2c" />
                    <path d="M21 1h5c3 6 7 9 11 13l-9-3-6 5-5-8z" fill="#a9902a" /><path d="M25 16l2-7 3 5 3-5 4 8" stroke="#dfe3dc" strokeWidth="1.500" fill="none" />
                    <path d="M2 21c6-6 12-4 18 0M16 15c4 4 12 5 20 7M33 17c6 0 10 2 15 4" stroke="#e3dcb4" strokeWidth="1.500" fill="none" />
                </svg>
            </label>
            <nav className="flex">
                {apps.map((app) => (
                    <button key={app.name} aria-label={app.name} className="relative flex h-[46px] w-11 items-center justify-center">
                        {app.active && <span className="absolute inset-x-[2px] inset-y-[3px] rounded-sm bg-white/5" />}
                        {app.alert && <span className="absolute inset-x-[2px] inset-y-[3px] rounded-sm border-r-2 border-[#9b565b] bg-[#85464c]" />}
                        <span className="relative">{app.icon}</span>
                        {app.badge && <span className="absolute top-[7px] right-[7px] flex size-[14px] items-center justify-center rounded-full bg-[#f04e52] text-[11px]">{app.badge}</span>}
                        {app.open && <span className="absolute bottom-1 h-[3px] w-[6px] rounded-full bg-[#9aa3ad]" />}
                        {app.active && <span className="absolute bottom-1 h-[3px] w-4 rounded-full bg-[#1e90f0]" />}
                        {app.alert && <span className="absolute bottom-1 h-[3px] w-[6px] rounded-full bg-[#ff9aa4]" />}
                    </button>
                ))}
            </nav>
            <div className="flex-1" />
            <div className="flex items-center">
                <ChevronUp size={17} />
                <svg className="ml-4" width="18" height="18"><path d="m5 1 3 2-3 2-3-2zM12 1l3 2-3 2-3-2zM5 5l3 2-3 2-3-2zM12 5l3 2-3 2-3-2z" fill="#fff" /><rect y="6" width="9" height="10" rx="1" fill="#e0142c" /><text x="4.500" y="14" fontSize="8" fontWeight="bold" textAnchor="middle" fill="#fff">5</text></svg>
                <svg className="ml-3" width="18" height="18" fill="none" stroke="#fff" strokeWidth="1.300"><path d="M10 2H2q-1 0-1 1v9q0 1 1 1h10v-3M4 16h7M8 13v3M12 1h4v5h-4zM14 6v10" /></svg>
                <svg className="ml-[6px]" width="17" height="16" fill="none" stroke="#fff" strokeWidth="1.300"><path d="M1 5.500v5h3l4 3v-11l-4 3zM10 5.500q2 2.500 0 5" /><path d="M12 3.500q4 4.500 0 9M14 1.500q5 6.500 0 13" stroke="#7b8793" /></svg>
                <svg className="ml-[8px]" width="18" height="16" fill="none" stroke="#fff" strokeWidth="1.400"><path d="M6 4h8q1 0 1 1v7q0 1-1 1H2q-1 0-1-1V7M16 7v3" /><path d="M6 6h7v5H4z" fill="#fff" stroke="none" /><path d="m4 0-3 5h2v3l3-5H4z" fill="#fff" strokeWidth=".5" /></svg>
            </div>
            <div className="ml-[14px] text-right text-xs leading-4">
                <p>10:40 AM</p>
                <p>4/18/2025</p>
            </div>
        </footer>
    );
}

export default function App() {
    return (
        <div className="flex h-screen flex-col overflow-hidden bg-[#003662] font-[Roboto,sans-serif] text-[#d3d8df]">
            <header className="shrink-0">
                <div className="flex h-[23px] items-center bg-[#f2f2f2] pr-[3px] pl-[2px] font-['Noto_Sans',sans-serif] text-sm text-[#8e8e8e]">
                    <Hat size={16} color="#fff" />
                    <h1 className="flex-1 pl-1">AppWizard V1.56_6.48 - *NewProject1</h1>
                    <button aria-label="Minimize" className="flex w-[47px] justify-center"><Minus size={12} /></button>
                    <button aria-label="Restore" className="flex w-[47px] justify-center">
                        <svg width="11" height="11" fill="none" stroke="#8e8e8e"><rect x=".5" y="2.500" width="8" height="8" rx="1" /><path d="M3 .5h6q1.500 0 1.500 1.500v6" /></svg>
                    </button>
                    <button aria-label="Close" className="flex w-[47px] justify-center"><X size={14} strokeWidth={1.5} /></button>
                </div>
                <nav className="flex h-[21px] items-start gap-3 bg-white pl-[7px] text-sm text-[#a0a0a0]">
                    {["File", "Edit", "Project", "Resource", "Help"].map((m) => <button key={m}>{m}</button>)}
                </nav>
            </header>
            <main className="flex min-h-0 flex-1">
                <div className="flex w-[496px] shrink-0 flex-col border-r-4 border-[#f0f1f5]">
                    <AddObjects />
                    <HierarchicTree />
                    <Resources />
                </div>
                <div className="flex min-w-0 flex-1 flex-col">
                    <Editor />
                    <Interactions />
                </div>
                <Properties />
            </main>
            <Taskbar />
        </div>
    );
}
